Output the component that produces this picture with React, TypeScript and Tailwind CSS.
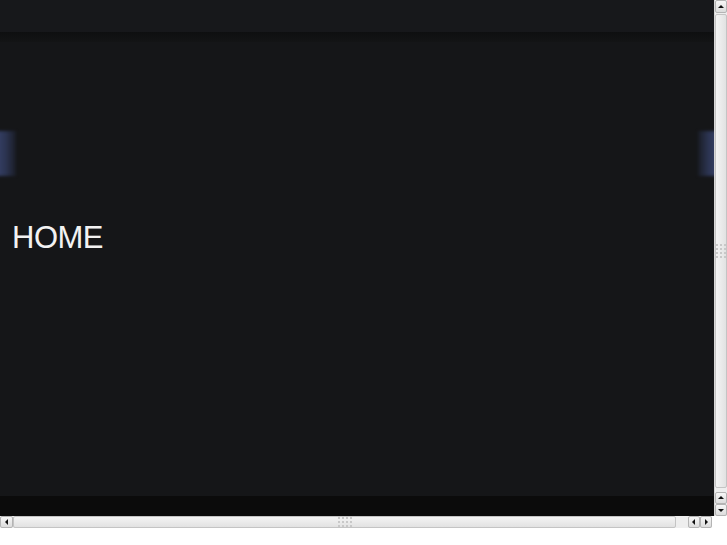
import React from 'react'

function ArrowBtn({ dir, className = '' }: { dir: 'up' | 'down' | 'left' | 'right'; className?: string }) {
  const pts = {
    up: '2,6 5,3 8,6',
    down: '2,4 5,7 8,4',
    left: '6,2 3,5 6,8',
    right: '4,2 7,5 4,8',
  }[dir]
  return (
    <div className={`flex items-center justify-center border border-[#b4b4b4] rounded-[2px] bg-gradient-to-b from-[#f7f7f7] to-[#dcdcdc] ${className}`}>
      <svg width="10" height="10" viewBox="0 0 10 10">
        <polygon points={pts} fill="#111" />
      </svg>
    </div>
  )
}

function Grip({ vertical }: { vertical?: boolean }) {
  return (
    <div className={`grid gap-[2px] ${vertical ? 'grid-cols-3' : 'grid-cols-4'}`}>
      {Array.from({ length: 12 }).map((_, i) => (
        <span key={i} className="w-[2px] h-[2px] bg-[#c8c8c8]" />
      ))}
    </div>
  )
}

export default function App() {
  return (
    <div className="w-[727px] h-[545px] bg-white flex flex-col overflow-hidden" style={{ fontFamily: '"Liberation Sans", Arial, sans-serif' }}>
      <div className="flex h-[516px]">
        <div className="w-[714px] flex flex-col bg-[#151618] overflow-hidden">
          <div className="h-[32px] bg-[#17181b]" />
          <div className="h-[10px] bg-gradient-to-b from-[#0e0f10] to-[#131415]" />
          <div className="relative flex-1 px-[12px] pt-[176px]">
            <div className="absolute -left-[4px] top-[89px] w-[20px] h-[45px] bg-gradient-to-r from-[#374269] via-[#2b3350] to-[#1a1d26] blur-[1.5px]" />
            <div className="absolute -right-[4px] top-[89px] w-[20px] h-[45px] bg-gradient-to-l from-[#374269] via-[#2b3350] to-[#1a1d26] blur-[1.5px]" />
            <h1 className="relative text-[31px] leading-[40px] text-[#f2f2f2] tracking-[-0.5px]">HOME</h1>
          </div>
          <div className="h-[20px] bg-[#0b0b0b]" />
        </div>
        <div className="w-[13px] flex flex-col bg-[#eeeeee] border-l border-[#d8d8d8]">
          <ArrowBtn dir="up" className="h-[13px]" />
          <div className="flex-1 my-[1px] border border-[#c4c4c4] rounded-[2px] bg-gradient-to-r from-[#f4f4f4] to-[#e2e2e2] flex items-center justify-center">
            <Grip vertical />
          </div>
          <ArrowBtn dir="up" className="h-[12px] mt-[3px]" />
          <ArrowBtn dir="down" className="h-[12px]" />
        </div>
      </div>
      <div className="flex h-[12px] bg-[#eeeeee]">
        <ArrowBtn dir="left" className="w-[13px]" />
        <div className="w-[663px] border border-[#c4c4c4] rounded-[2px] bg-gradient-to-b from-[#f4f4f4] to-[#e2e2e2] flex items-center justify-center">
          <Grip />
        </div>
        <div className="w-[12px]" />
        <ArrowBtn dir="left" className="w-[12px]" />
        <ArrowBtn dir="right" className="w-[12px]" />
        <div className="flex-1 bg-white" />
      </div>
      <div className="flex-1 bg-white" />
    </div>
  )
}
